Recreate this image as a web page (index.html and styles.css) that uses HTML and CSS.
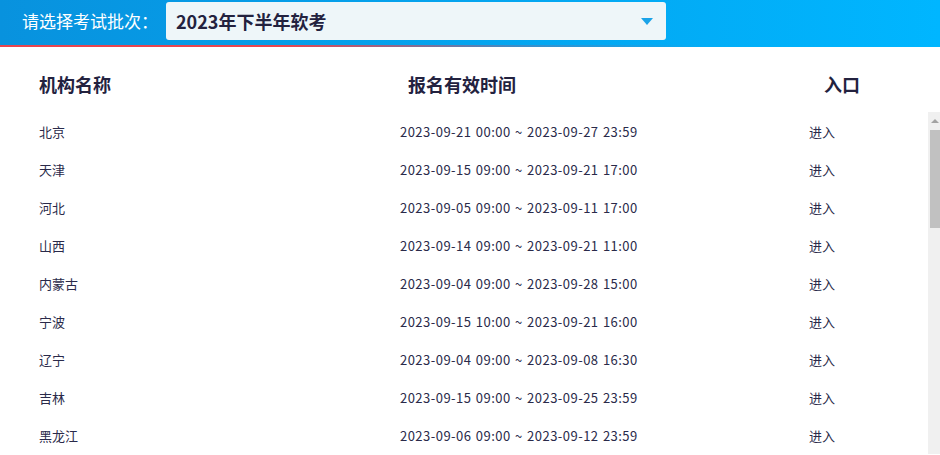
FILE: index.html
```html
<!doctype html>
<html lang="zh-CN">
<head>
    <meta charset="utf-8">
    <title>软考报名入口</title>
    <link rel="stylesheet" href="styles.css">
</head>
<body>
    <div class="topbar">
        <span class="topbar-label">请选择考试批次：</span>
        <div class="batch-select">
            <span>2023年下半年软考</span>
            <span class="caret"></span>
        </div>
    </div>

    <div class="table-head">
        <div>机构名称</div>
        <div>报名有效时间</div>
        <div>入口</div>
    </div>

    <div class="table-wrap">
        <div class="table-body">
            <div class="row"><div>北京</div><div class="time">2023-09-21 00:00 ~ 2023-09-27 23:59</div><div><a class="enter" href="#">进入</a></div></div>
            <div class="row"><div>天津</div><div class="time">2023-09-15 09:00 ~ 2023-09-21 17:00</div><div><a class="enter" href="#">进入</a></div></div>
            <div class="row"><div>河北</div><div class="time">2023-09-05 09:00 ~ 2023-09-11 17:00</div><div><a class="enter" href="#">进入</a></div></div>
            <div class="row"><div>山西</div><div class="time">2023-09-14 09:00 ~ 2023-09-21 11:00</div><div><a class="enter" href="#">进入</a></div></div>
            <div class="row"><div>内蒙古</div><div class="time">2023-09-04 09:00 ~ 2023-09-28 15:00</div><div><a class="enter" href="#">进入</a></div></div>
            <div class="row"><div>宁波</div><div class="time">2023-09-15 10:00 ~ 2023-09-21 16:00</div><div><a class="enter" href="#">进入</a></div></div>
            <div class="row"><div>辽宁</div><div class="time">2023-09-04 09:00 ~ 2023-09-08 16:30</div><div><a class="enter" href="#">进入</a></div></div>
            <div class="row"><div>吉林</div><div class="time">2023-09-15 09:00 ~ 2023-09-25 23:59</div><div><a class="enter" href="#">进入</a></div></div>
            <div class="row"><div>黑龙江</div><div class="time">2023-09-06 09:00 ~ 2023-09-12 23:59</div><div><a class="enter" href="#">进入</a></div></div>
        </div>
        <!-- page scrollbar is hidden in the capture, so it is drawn -->
        <div class="scrollbar">
            <span class="scroll-up"></span>
            <span class="scroll-thumb"></span>
        </div>
    </div>
</body>
</html>
```

FILE: styles.css
```css
/* General styles */
body {
    margin: 0;
    padding: 0;
    font-family: "Noto Sans CJK SC", "Noto Sans", sans-serif;
    color: #2a2a4a;
    background-color: #fff;
    overflow: hidden;
}

/* Top bar */
.topbar {
    height: 45px;
    display: flex;
    align-items: flex-start;
    padding-left: 22px;
    background: linear-gradient(to right, #0892de, #00b6ff);
    border-bottom: 2px solid transparent;
    border-image: linear-gradient(to right, #e8454f 0%, #e8454f 30%, rgba(232, 69, 79, 0.25) 55%, rgba(255, 255, 255, 0) 75%) 1;
}

.topbar-label {
    color: #fff;
    font-size: 17px;
    line-height: 42px;
    margin-right: 8px;
}

.batch-select {
    margin-top: 2px;
    width: 500px;
    height: 38px;
    box-sizing: border-box;
    padding: 0 13px 0 10px;
    display: flex;
    align-items: center;
    justify-content: space-between;
    background-color: #eef6f9;
    border-radius: 3px;
    font-size: 18px;
    font-weight: bold;
    color: #23223f;
}

.caret {
    width: 0;
    height: 0;
    border-left: 6px solid transparent;
    border-right: 6px solid transparent;
    border-top: 7px solid #1aa3e8;
}

/* Table */
.table-head {
    display: grid;
    grid-template-columns: 369px 416px auto;
    padding: 8px 0 0 39px;
    height: 57px;
    align-items: center;
    font-size: 18px;
    font-weight: bold;
    color: #23223f;
}

.table-wrap {
    display: flex;
    height: 342px;
}

.table-body {
    flex: 1;
    overflow: hidden;
}

.row {
    display: grid;
    grid-template-columns: 361px 409px auto;
    padding-left: 39px;
    height: 38px;
    align-items: center;
    font-size: 13px;
}

.time {
    letter-spacing: 0.47px;
    word-spacing: 1px;
}

.enter {
    color: #2a2a4a;
    text-decoration: none;
}

.enter:hover {
    color: #0096e0;
}

/* Scrollbar */
.scrollbar {
    width: 12px;
    background-color: #f0f0f0;
    display: flex;
    flex-direction: column;
    align-items: flex-end;
}

.scroll-up {
    width: 0;
    height: 0;
    margin: 7px 1px 7px 0;
    border-left: 4px solid transparent;
    border-right: 4px solid transparent;
    border-bottom: 4px solid #a3a3a3;
}

.scroll-thumb {
    width: 10px;
    height: 98px;
    background-color: #c1c1c1;
}
```
